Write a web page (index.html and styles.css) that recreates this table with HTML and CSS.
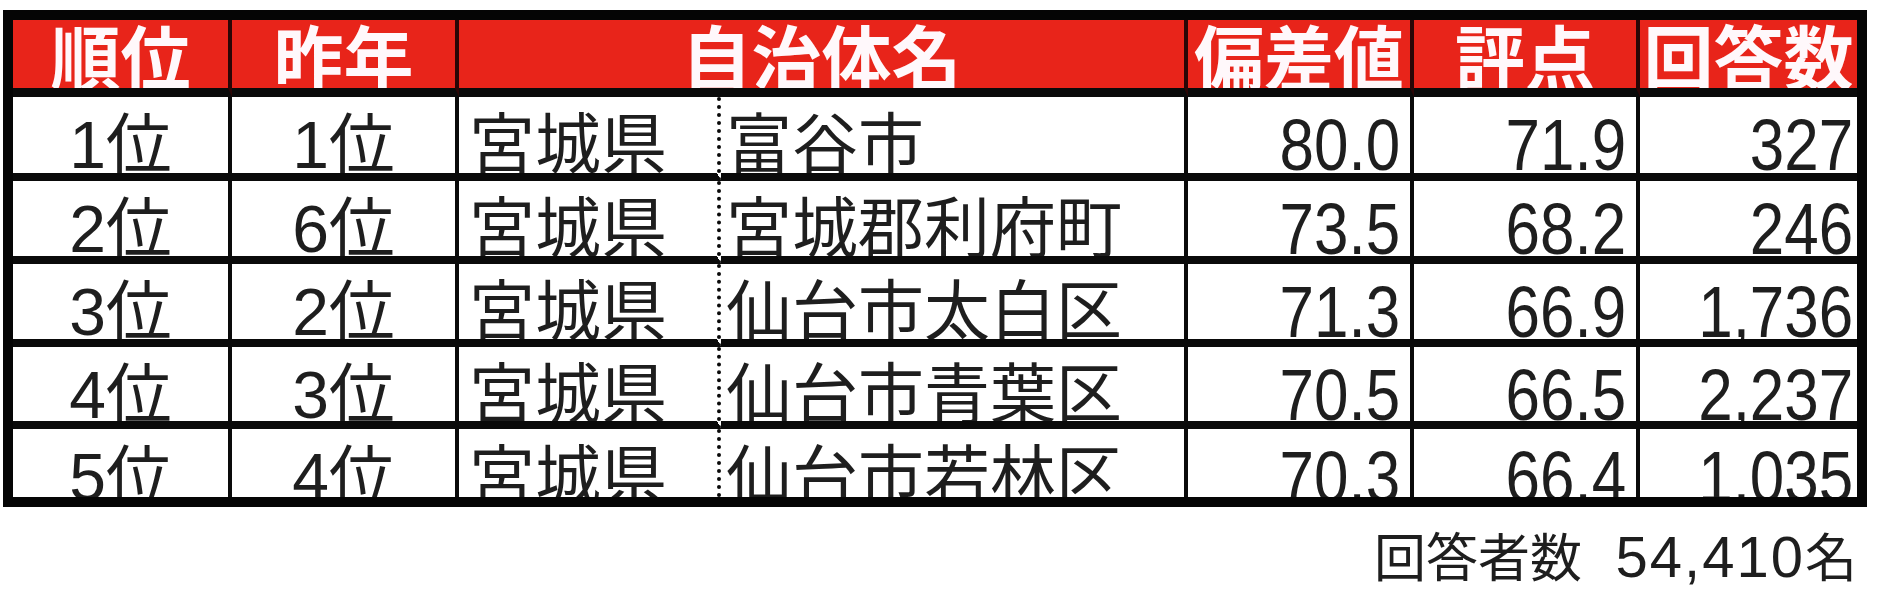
FILE: index.html
```html
<!DOCTYPE html>
<html lang="ja">
<head>
<meta charset="utf-8">
<title>自治体ランキング</title>
<link rel="stylesheet" href="styles.css">
</head>
<body>
<div class="wrap">
  <div class="ranking">
    <div class="cell head c1">順位</div>
    <div class="cell head c2">昨年</div>
    <div class="cell head name">自治体名</div>
    <div class="cell head c5">偏差値</div>
    <div class="cell head c6">評点</div>
    <div class="cell head c7">回答数</div>

    <div class="cell ctr">1位</div>
    <div class="cell ctr">1位</div>
    <div class="cell pref">宮城県</div>
    <div class="cell city">富谷市</div>
    <div class="cell num"><span>80.0</span></div>
    <div class="cell num"><span>71.9</span></div>
    <div class="cell num last"><span>327</span></div>

    <div class="cell ctr">2位</div>
    <div class="cell ctr">6位</div>
    <div class="cell pref">宮城県</div>
    <div class="cell city">宮城郡利府町</div>
    <div class="cell num"><span>73.5</span></div>
    <div class="cell num"><span>68.2</span></div>
    <div class="cell num last"><span>246</span></div>

    <div class="cell ctr">3位</div>
    <div class="cell ctr">2位</div>
    <div class="cell pref">宮城県</div>
    <div class="cell city">仙台市太白区</div>
    <div class="cell num"><span>71.3</span></div>
    <div class="cell num"><span>66.9</span></div>
    <div class="cell num last"><span>1,736</span></div>

    <div class="cell ctr">4位</div>
    <div class="cell ctr">3位</div>
    <div class="cell pref">宮城県</div>
    <div class="cell city">仙台市青葉区</div>
    <div class="cell num"><span>70.5</span></div>
    <div class="cell num"><span>66.5</span></div>
    <div class="cell num last"><span>2,237</span></div>

    <div class="cell ctr bottom">5位</div>
    <div class="cell ctr bottom">4位</div>
    <div class="cell pref bottom">宮城県</div>
    <div class="cell city bottom">仙台市若林区</div>
    <div class="cell num bottom"><span>70.3</span></div>
    <div class="cell num bottom"><span>66.4</span></div>
    <div class="cell num last bottom"><span>1,035</span></div>
  </div>
  <div class="total">回答者数 <span class="total-num">54,410</span>名</div>
</div>
</body>
</html>
```
FILE: styles.css
```css
html, body {
  margin: 0;
  padding: 0;
  background: #ffffff;
}

.wrap {
  width: 1864px;
  margin: 10px 0 0 3px;
}

.ranking {
  display: grid;
  grid-template-columns: 219px 227px 262px 467px 226px 226px 217px;
  grid-template-rows: 77px 84px 83px 83px 82px 68px;
  border: 10px solid #050505;
  background: #ffffff;
}

.cell {
  box-sizing: border-box;
  overflow: hidden;
  white-space: nowrap;
  border-right: 4px solid #0a0a0a;
  border-bottom: 8px solid #0a0a0a;
  font-family: "Liberation Sans", "Noto Sans CJK JP", sans-serif;
  font-size: 66px;
  line-height: 50px;
  padding-top: 23px;
  color: #1e1e1e;
}

.head {
  background: #e8241a;
  color: #fff8fb;
  font-family: "Noto Sans CJK JP", sans-serif;
  font-weight: 700;
  font-size: 70px;
  line-height: 60px;
  padding-top: 5px;
  text-align: center;
  border-bottom-width: 9px;
  border-right-color: #2a0606;
}

.name {
  grid-column: span 2;
}

.c7,
.last {
  border-right: none;
}

.ctr {
  text-align: center;
}

.pref {
  padding-left: 10px;
  border-right: 4px dotted #0a0a0a;
}

.city {
  padding-left: 5px;
}

.num {
  text-align: right;
  padding-right: 10px;
}

.num.last {
  padding-right: 4px;
}

.num span {
  display: inline-block;
  font-size: 72px;
  transform: scaleX(0.86);
  transform-origin: right center;
}

.bottom {
  border-bottom: none;
}

.total {
  text-align: right;
  padding-right: 10px;
  margin-top: 18px;
  font-family: "Noto Sans CJK JP", sans-serif;
  font-size: 52px;
  line-height: 60px;
  color: #1e1e1e;
}

.total-num {
  margin-left: 22px;
  font-family: "Liberation Sans", sans-serif;
  font-size: 58px;
  letter-spacing: 2px;
}
```
